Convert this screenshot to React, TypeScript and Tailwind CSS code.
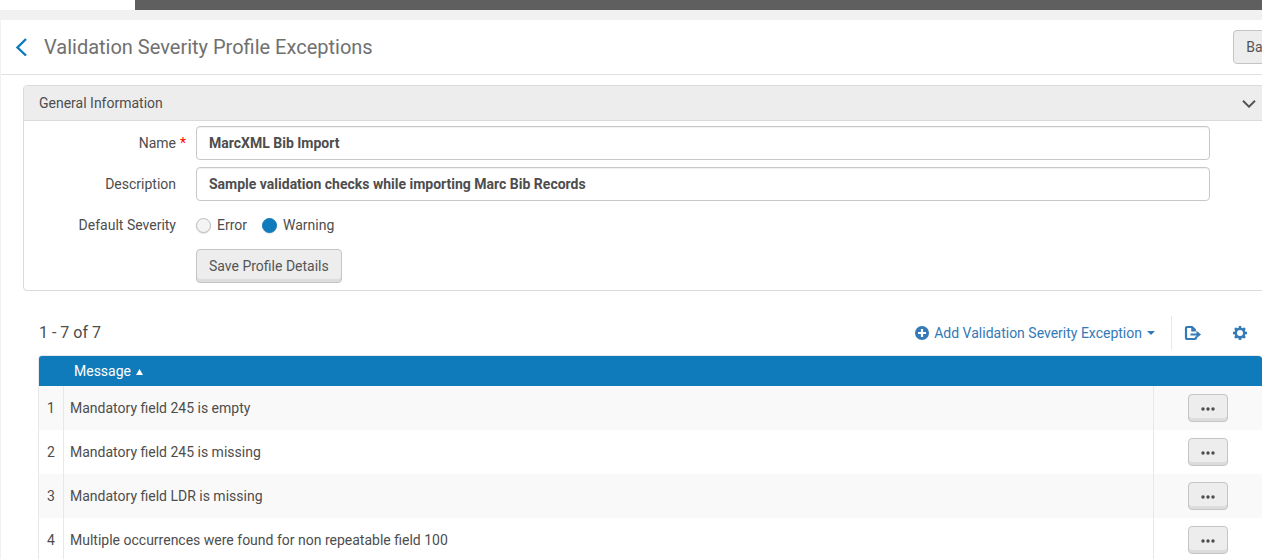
import React, { useState } from "react";

const messages = [
  "Mandatory field 245 is empty",
  "Mandatory field 245 is missing",
  "Mandatory field LDR is missing",
  "Multiple occurrences were found for non repeatable field 100",
];

const raisedButton =
  "rounded-[4px] border border-[#c4c4c4] bg-[#ededed] shadow-[inset_0_-3px_0_#dcdcdc] text-[#555]";

const textInput =
  "h-[34px] w-full rounded-[4px] border border-[#c8c8c8] bg-white px-3 text-sm font-bold text-[#4d4d4d] shadow-[inset_0_1px_1px_rgba(0,0,0,0.06)] outline-none";

function BackIcon() {
  return (
    <svg width="12" height="18" viewBox="0 0 12 18" fill="none" stroke="#0f7bbb" strokeWidth="2.4" aria-hidden="true">
      <path d="M11 1 2.5 9.500l8.500 8" />
    </svg>
  );
}

function ChevronIcon() {
  return (
    <svg width="14" height="9" viewBox="0 0 14 9" fill="none" stroke="#555" strokeWidth="2" aria-hidden="true">
      <path d="M1 1.700 7 7.700l6-6" />
    </svg>
  );
}

function PlusIcon() {
  return (
    <svg width="14" height="14" viewBox="0 0 14 14" aria-hidden="true">
      <circle cx="7" cy="7" r="7" fill="#337ab7" />
      <path d="M7 3v8M3 7h8" stroke="#fff" strokeWidth="2.2" />
    </svg>
  );
}

function ExportIcon() {
  return (
    <svg width="18" height="16" viewBox="0 0 18 16" fill="none" stroke="#337ab7" aria-hidden="true">
      <path d="M12 11.5v1.3c0 .8-.5 1.2-1.2 1.2H3.2C2.400 14 2 13.600 2 12.800V3.200C2 2.400 2.400 2 3.200 2H8l3.500 3.300" strokeWidth="2.2" />
      <path d="M7.500 1.500v4.700h4.700z" fill="#337ab7" strokeWidth="0.500" />
      <path d="M6.500 9.500h7" strokeWidth="2" />
      <path d="M12.500 5.800 17 9.500l-4.500 3.700z" fill="#337ab7" stroke="none" />
    </svg>
  );
}

function GearIcon() {
  return (
    <svg width="14" height="14" viewBox="0 0 14 14" fill="none" stroke="#337ab7" aria-hidden="true">
      <circle cx="7" cy="7" r="4.300" strokeWidth="2.600" />
      <path
        d="M7 0v2.500M7 11.500V14M0 7h2.500M11.500 7H14M2.050 2.050l1.700 1.700M10.250 10.250l1.700 1.700M2.050 11.950l1.700-1.700M10.250 3.750l1.700-1.700"
        strokeWidth="2.600"
      />
    </svg>
  );
}

function FormRow({ label, htmlFor, required, children }: {
  label?: string;
  htmlFor?: string;
  required?: boolean;
  children: React.ReactNode;
}) {
  return (
    <div className="flex min-h-[34px] items-center">
      <div className="flex w-[172px] shrink-0 justify-end pr-5">
        {label && (
          <label htmlFor={htmlFor} className="relative">
            {label}
            {required && <span className="absolute left-full pl-1 text-[#f00]">*</span>}
          </label>
        )}
      </div>
      {children}
    </div>
  );
}

function Severity({ value, selected, onSelect }: {
  value: string;
  selected: string;
  onSelect: (value: string) => void;
}) {
  return (
    <label className="flex items-center gap-1.5">
      <input
        type="radio"
        name="severity"
        value={value}
        checked={selected === value}
        onChange={() => onSelect(value)}
        className="size-[15px] appearance-none rounded-full border border-[#bbb] bg-[#f4f4f4] shadow-[0_1px_1px_rgba(0,0,0,0.1)] checked:border-[#0f7bbb] checked:bg-[#0f7bbb]"
      />
      {value}
    </label>
  );
}

export default function App() {
  const [severity, setSeverity] = useState("Warning");

  return (
    <div className="h-screen overflow-hidden bg-[#f1f1f1] font-['Roboto',sans-serif] text-sm text-[#4d4d4d]">
      <div className="flex h-2.5">
        <div className="w-[135px] bg-white" />
        <div className="grow bg-[#5f5f5f]" />
      </div>

      <main className="mt-2.5 ml-px min-h-full bg-white">
        <header className="flex h-[55px] items-center overflow-hidden border-b border-[#e0e0e0] pl-3.5">
          <a href="#back" aria-label="Go back">
            <BackIcon />
          </a>
          <h1 className="ml-[17px] grow text-xl text-[#707070]">Validation Severity Profile Exceptions</h1>
          <button className="-mr-7 h-[34px] shrink-0 rounded-[4px] border border-[#c4c4c4] bg-[#ededed] px-3 text-[#555]">
            Back
          </button>
        </header>

        <section className="mt-2.5 -mr-2 ml-[22px] rounded-[4px] border border-[#dadada]">
          <div className="flex h-[35px] items-center justify-between rounded-t-[3px] border-b border-[#dadada] bg-[#ededed] pr-[13px] pl-[15px]">
            <h2>General Information</h2>
            <button aria-label="Collapse">
              <ChevronIcon />
            </button>
          </div>
          <form className="flex flex-col gap-[7px] pt-[5px] pr-[59px] pb-[7px]" onSubmit={(e) => e.preventDefault()}>
            <FormRow label="Name" htmlFor="name" required>
              <input id="name" className={textInput} defaultValue="MarcXML Bib Import" />
            </FormRow>
            <FormRow label="Description" htmlFor="description">
              <input
                id="description"
                className={textInput}
                defaultValue="Sample validation checks while importing Marc Bib Records"
              />
            </FormRow>
            <div className="flex min-h-[34px] items-center" role="radiogroup" aria-labelledby="severity-label">
              <span id="severity-label" className="w-[172px] shrink-0 pr-5 text-right">
                Default Severity
              </span>
              <div className="flex gap-[15px]">
                <Severity value="Error" selected={severity} onSelect={setSeverity} />
                <Severity value="Warning" selected={severity} onSelect={setSeverity} />
              </div>
            </div>
            <FormRow>
              <button className={`h-[34px] px-3 ${raisedButton}`}>Save Profile Details</button>
            </FormRow>
          </form>
        </section>

        <section className="mt-[25px] ml-[37px]">
          <div className="flex h-[34px] items-center justify-between">
            <h2 className="pl-px text-base">1 - 7 of 7</h2>
            <div className="flex items-center text-[#337ab7]">
              <button className="flex items-center gap-[5px]">
                <PlusIcon />
                Add Validation Severity Exception
                <svg width="8" height="4" viewBox="0 0 8 4" fill="#337ab7" aria-hidden="true">
                  <path d="M0 0h8L4 4z" />
                </svg>
              </button>
              <div className="ml-4 flex h-[34px] items-center gap-[31px] border-l border-[#e8e8e8] pr-[15px] pl-3">
                <button aria-label="Export">
                  <ExportIcon />
                </button>
                <button aria-label="Table settings">
                  <GearIcon />
                </button>
              </div>
            </div>
          </div>

          <div className="mt-[5px] overflow-hidden rounded-t-[4px] border-t border-l border-[#e8e8e8]">
            <table className="w-full table-fixed border-separate border-spacing-0">
              <colgroup>
                <col className="w-[25px]" />
                <col />
                <col className="w-[108px]" />
              </colgroup>
              <thead>
                <tr className="h-[30px] bg-[#0f7bbb] text-left text-white">
                  <th aria-label="Row" />
                  <th className="pl-2.5 font-normal" aria-sort="ascending">
                    <button className="flex items-center gap-[5px]">
                      Message
                      <svg width="7" height="8" viewBox="0 0 7 8" fill="#fff" aria-hidden="true">
                        <path d="M0 8h7L3.500 2z" />
                      </svg>
                    </button>
                  </th>
                  <th aria-label="Actions" />
                </tr>
              </thead>
              <tbody>
                {messages.map((message, i) => (
                  <tr key={message} className="h-11 odd:bg-[#f9f9f9] even:bg-white">
                    <td className="border-r border-[#e8e8e8] text-center">{i + 1}</td>
                    <td className="border-r border-[#e8e8e8] pl-1.5">{message}</td>
                    <td className="text-center">
                      <button
                        aria-label="Row actions"
                        className={`inline-flex h-7 w-10 items-center justify-center pt-0.5 align-middle ${raisedButton}`}
                      >
                        <svg width="14" height="4" viewBox="0 0 14 4" fill="#4d4d4d" aria-hidden="true">
                          <circle cx="2" cy="2" r="1.700" />
                          <circle cx="7" cy="2" r="1.700" />
                          <circle cx="12" cy="2" r="1.700" />
                        </svg>
                      </button>
                    </td>
                  </tr>
                ))}
              </tbody>
            </table>
          </div>
        </section>
      </main>
    </div>
  );
}
